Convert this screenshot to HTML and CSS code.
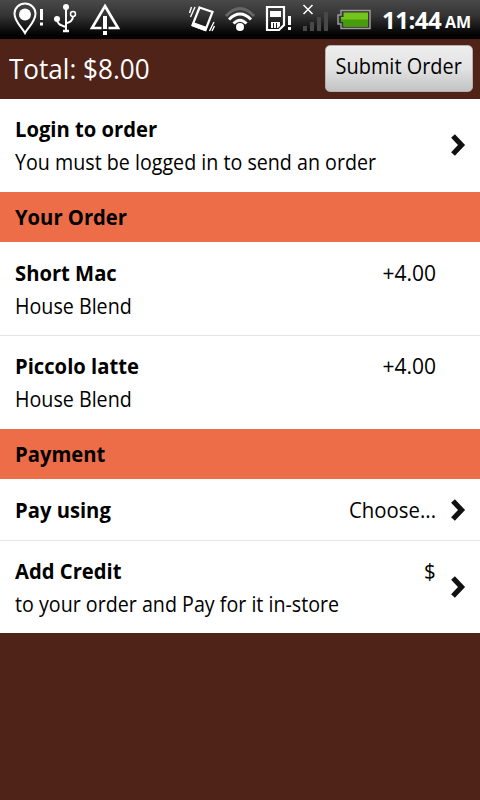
FILE: index.html
```html
<!DOCTYPE html>
<html lang="en">
<head>
<meta charset="utf-8">
<title>Order</title>
<link rel="stylesheet" href="styles.css">
</head>
<body>
<div class="status">
  <svg class="status-icons" width="380" height="38" viewBox="0 0 380 38" fill="none" stroke="#fff">
    <path d="M25 33 C22 27 14.500 22 14.500 13.500 A10.500 10 0 0 1 35.500 13.500 C35.500 22 28 27 25 33Z" stroke-width="2"/>
    <circle cx="25" cy="14.500" r="6" fill="#fff" stroke="none"/>
    <path d="M41.500 9V20M41.500 22.500V25.500" stroke-width="3"/>
    <path d="M66 7V31M57 19C57 24 60 25 66 27M73 16C73 21 70 22 66 23.500" stroke-width="2"/>
    <path d="M63 31H69" stroke-width="2.500"/>
    <circle cx="66" cy="7" r="3" fill="#fff" stroke="none"/>
    <circle cx="57" cy="19" r="3" fill="#fff" stroke="none"/>
    <circle cx="73" cy="14" r="2.500" stroke-width="1.500"/>
    <path d="M105 6L118 28H92Z" stroke-width="2.600"/>
    <path d="M105 16V30" stroke="#222" stroke-width="7"/>
    <path d="M105 16V29M105 31V35" stroke-width="4"/>
    <path d="M199.500 7.500L212.500 12L205.500 30L192.500 25Z" stroke-width="2.200"/>
    <path d="M193 22L207 27L205 31L191.500 26Z" fill="#fff" stroke="none"/>
    <path d="M195 7L190.500 17M191.500 7L189.500 13M214 22L209.500 31M214.500 26L212 31" stroke-width="1.400"/>
    <path d="M226 16Q240 1 254 16" stroke="#666" stroke-width="3"/>
    <path d="M229 19.500Q240 8.500 251 19.500M233.500 23.500Q240 17 246.500 23.500" stroke-width="3"/>
    <circle cx="240" cy="27" r="4" fill="#fff" stroke="none"/>
    <path d="M267 7H284V25L279 30H267Z" stroke-width="2.200"/>
    <path d="M270 11H281V17H270Z" fill="#fff" stroke="none"/>
    <path d="M271 22H280V26L278 28H271Z" fill="#fff" stroke="none"/>
    <path d="M273.500 23V28M276.500 23V28" stroke="#222" stroke-width="1"/>
    <path d="M289.500 16V25M289.500 27V30" stroke-width="3"/>
    <path d="M303.500 5L312.500 14M312.500 5L303.500 14" stroke-width="1.500"/>
    <path d="M305 26V31M312 22V31M319 17V31M326 12V31" stroke="#484848" stroke-width="4"/>
    <path d="M341 10.500H370V28.500H341V24H338V15H341Z" fill="#333" stroke="#999" stroke-width="1.500"/>
    <path d="M343.500 12.500H368V26.500H343.500V22H341V17H343.500Z" fill="#73c51b" stroke="none"/>
    <path d="M341 19.500H368V26.500H343.500V22H341Z" fill="#469c0b" stroke="none"/>
  </svg>
  <span class="clock">11:44</span><span class="ampm">AM</span>
</div>
<header class="header">
  <h1 class="total"><span>Total: $8.00</span></h1>
  <button class="submit"><span>Submit Order</span></button>
</header>
<main class="list">
  <section class="row">
    <div class="text"><div class="name"><span>Login to order</span></div><div class="detail"><span>You must be logged in to send an order</span></div></div>
    <svg class="chevron" width="16" height="24" viewBox="0 0 16 24"><path d="M3 3L11.500 12L3 21"/></svg>
  </section>
  <h2 class="section"><span>Your Order</span></h2>
  <section class="row lined">
    <div class="text"><div class="name"><span>Short Mac</span></div><div class="detail"><span>House Blend</span></div></div>
    <div class="value price"><span>+4.00</span></div>
  </section>
  <section class="row">
    <div class="text"><div class="name"><span>Piccolo latte</span></div><div class="detail"><span>House Blend</span></div></div>
    <div class="value price"><span>+4.00</span></div>
  </section>
  <h2 class="section"><span>Payment</span></h2>
  <section class="row short lined">
    <div class="text"><div class="name"><span>Pay using</span></div></div>
    <div class="value"><span>Choose...</span></div>
    <svg class="chevron" width="16" height="24" viewBox="0 0 16 24"><path d="M3 3L11.500 12L3 21"/></svg>
  </section>
  <section class="row last">
    <div class="text"><div class="name"><span>Add Credit</span></div><div class="detail"><span>to your order and Pay for it in-store</span></div></div>
    <div class="value"><span>$</span></div>
    <svg class="chevron" width="16" height="24" viewBox="0 0 16 24"><path d="M3 3L11.500 12L3 21"/></svg>
  </section>
</main>
</body>
</html>
```
FILE: styles.css
```css
* { box-sizing: border-box; }
body {
  margin: 0;
  width: 480px;
  height: 800px;
  overflow: hidden;
  background: #502319;
  color: #000;
  font-family: "Open Sans", "Noto Sans", sans-serif;
  font-size: 22px;
}
.status {
  display: flex;
  height: 39px;
  background: linear-gradient(#494949 0, #343434 40%, #101010 75%, #000 92%);
  color: #fff;
  font-weight: 700;
  white-space: nowrap;
}
.status-icons { flex: none; }
.clock { margin-left: 2px; width: 60px; font-size: 24px; line-height: 39px; letter-spacing: -0.5px; }
.ampm { margin-left: 3px; font-size: 16px; line-height: 44px; }
.header {
  display: flex;
  justify-content: space-between;
  height: 60px;
  padding: 6px 7px 0 9px;
}
.total { margin: 0; color: #fff; font-size: 28px; font-weight: 400; line-height: 47px; }
span { white-space: nowrap; }
.total span, .submit span, .name span, .detail span, .value span, .section span {
  display: inline-block;
  transform-origin: left;
}
.total span { transform: scaleX(0.932); }
.detail span { transform: scaleX(0.894); }
.name span, .section span { transform: scaleX(0.962); }
.submit {
  display: flex;
  justify-content: center;
  width: 148px;
  height: 47px;
  padding: 0;
  border: 1px solid #b9b0ae;
  border-radius: 5px;
  background: linear-gradient(#eee, #e2e2e2 50%, #c2c3c3);
  color: #000;
  font: inherit;
  line-height: 38px;
}
.submit span { transform: scaleX(0.905); transform-origin: center; }
.row {
  display: flex;
  height: 93px;
  padding: 14px 14px 0 15px;
  background: #fff;
}
.lined { padding-top: 15px; border-bottom: 1px solid #e6e6e6; }
.lined:not(.short) { height: 94px; }
.short { height: 62px; }
.last { height: 92px; }
.text { flex: 1; min-width: 0; }
.name { font-size: 21px; font-weight: 700; line-height: 33px; }
.detail, .value { line-height: 31px; }
.value { width: 110px; margin-right: 30px; text-align: right; }
.value span { transform: scaleX(0.925); transform-origin: right; }
.price span { transform: scaleX(0.955); }
.chevron { align-self: center; flex: none; margin-top: -15px; }
.chevron path { fill: none; stroke: #111; stroke-width: 5.2; }
.value:has(+ .chevron) { margin-right: 14px; }
.section {
  margin: 0;
  height: 50px;
  padding-left: 15px;
  background: #ed6d48;
  font-size: 21px;
  font-weight: 700;
  line-height: 50px;
}
```
